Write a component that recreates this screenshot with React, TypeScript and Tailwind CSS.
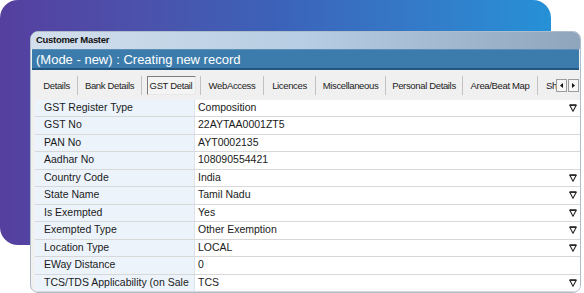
import React from "react";

const tabs = [
  { label: "Details", w: "w-[42px]" },
  { label: "Bank Details", w: "w-[64px]" },
  { label: "GST Detail", w: "w-[59px]", active: true },
  { label: "WebAccess", w: "w-[63px]" },
  { label: "Licences", w: "w-[52px]" },
  { label: "Miscellaneous", w: "w-[70px]" },
  { label: "Personal Details", w: "w-[77px]" },
  { label: "Area/Beat Map", w: "w-[75px]" },
];

const rows: [string, string, boolean][] = [
  ["GST Register Type", "Composition", true],
  ["GST No", "22AYTAA0001ZT5", false],
  ["PAN No", "AYT0002135", false],
  ["Aadhar No", "108090554421", false],
  ["Country Code", "India", true],
  ["State Name", "Tamil Nadu", true],
  ["Is Exempted", "Yes", true],
  ["Exempted Type", "Other Exemption", true],
  ["Location Type", "LOCAL", true],
  ["EWay Distance", "0", false],
  ["TCS/TDS Applicability (on Sale", "TCS", true],
];

const DropArrow = () => (
  <svg width="8" height="8" viewBox="0 0 8 8" className="shrink-0">
    <path d="M0.8 1.2 L7.2 1.2 L4 7.2 Z" fill="none" stroke="#2a2a2a" strokeWidth="1.1" strokeLinejoin="round" />
    <path d="M0.6 1.2 L7.4 1.2" stroke="#2a2a2a" strokeWidth="1.8" />
  </svg>
);

const App = () => {
  return (
    <div className="relative w-[584px] h-[293px] overflow-hidden bg-white font-['Liberation_Sans',Arial,sans-serif]">
      {/* backdrop card */}
      <div className="absolute left-0 top-0 w-[551px] h-[245px] rounded-[18px] bg-linear-to-r from-[#553f9f] via-[#3b62b8] to-[#2591d7]" />

      {/* Window */}
      <div className="relative ml-[30px] mt-[31px] w-[551px] h-[262px] rounded-[8px] overflow-hidden bg-[#f0f0f0] border border-[#aebdcc] flex flex-col">
        {/* Title bar */}
        <div className="h-[17px] shrink-0 flex items-center pl-[5px] bg-linear-to-r from-[#d3dfec] via-[#b7cde3] to-[#8fa5bb]">
          <span className="text-[9.5px] font-bold text-[#111] tracking-[-0.3px]">Customer Master</span>
        </div>

        {/* Mode header */}
        <div className="h-[21px] shrink-0 flex items-center pl-[4px] bg-[#3c7cac] border-t border-[#5a8fb8] border-b-2 border-b-[#24577f] mx-[1px]">
          <span className="text-[13px] text-white leading-none">(Mode - new) : Creating new record</span>
        </div>

        {/* Tabs */}
        <div className="h-[29.5px] shrink-0 flex items-center pl-[5px] pt-[2px] text-[9.5px] tracking-[-0.35px] text-[#222]">
          {tabs.map((t) => (
            <div key={t.label} className={`${t.w} h-[19px] flex items-center justify-center border-r border-[#c2c2c2]`}>
              {t.active ? (
                <div className="w-[49px] h-[19px] flex items-center justify-center border border-[#7d7d7d] border-r-[#e8e8e8] border-b-[#e8e8e8] bg-[#f4f4f4]">
                  {t.label}
                </div>
              ) : (
                t.label
              )}
            </div>
          ))}
          <div className="w-[18px] h-[19px] flex items-center pl-[8px] overflow-hidden whitespace-nowrap">Sh</div>
          <div className="flex gap-[1px]">
            <div className="w-[11px] h-[13px] flex items-center justify-center border border-[#9c9c9c] bg-[#f6f6f6]">
              <svg width="3" height="5" viewBox="0 0 3 5">
                <path d="M3 0 L0 2.5 L3 5 Z" fill="#111" />
              </svg>
            </div>
            <div className="w-[11px] h-[13px] flex items-center justify-center border border-[#9c9c9c] bg-[#f6f6f6]">
              <svg width="3" height="5" viewBox="0 0 3 5">
                <path d="M0 0 L3 2.5 L0 5 Z" fill="#111" />
              </svg>
            </div>
          </div>
        </div>

        {/* Grid */}
        <div className="ml-[4px] flex flex-col text-[10.5px] text-[#1a1a1a]">
          {rows.map(([label, value, drop]) => (
            <div key={label} className="h-[17.5px] flex border-b border-[#d8d8d8]">
              <div className="w-[160px] shrink-0 flex items-center pl-[9px] bg-[#ecf3fb] border-r border-[#dde3ea] overflow-hidden whitespace-nowrap">
                {label}
              </div>
              <div className="flex-1 flex items-center justify-between pl-[3px] pr-[3px] bg-white">
                <span>{value}</span>
                {drop && <DropArrow />}
              </div>
            </div>
          ))}
        </div>
      </div>
    </div>
  );
};

export default App;
